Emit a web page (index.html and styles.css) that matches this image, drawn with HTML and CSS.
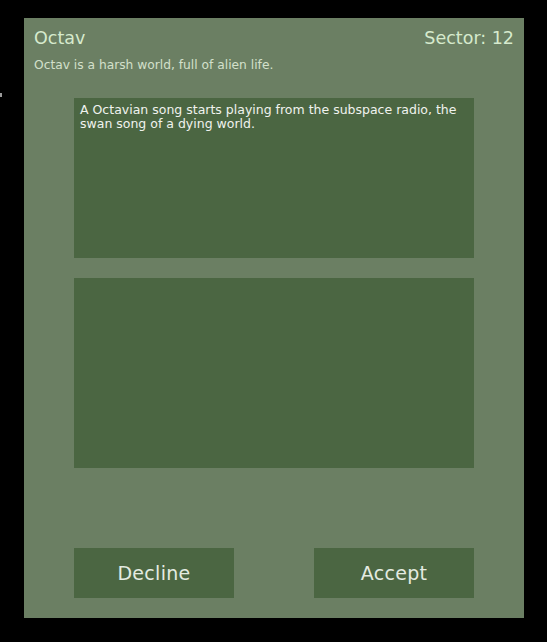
FILE: index.html
```html
<!DOCTYPE html>
<html>
<head>
<meta charset="utf-8">
<link rel="stylesheet" href="styles.css">
</head>
<body>
<span class="edge-mark"></span>
<div class="panel">
  <div class="header">
    <div class="title">Octav</div>
    <div class="sector">Sector: 12</div>
  </div>
  <div class="subtitle">Octav is a harsh world, full of alien life.</div>
  <div class="content">
    <div class="story">A Octavian song starts playing from the subspace radio, the swan song of a dying world.</div>
    <div class="options"></div>
    <div class="buttons">
      <button class="btn">Decline</button>
      <button class="btn">Accept</button>
    </div>
  </div>
</div>
</body>
</html>
```
FILE: styles.css
```css
html, body {
  margin: 0;
  padding: 0;
  background: #000;
  width: 547px;
  height: 642px;
  overflow: hidden;
  font-family: "DejaVu Sans", sans-serif;
}
body {
  position: relative;
  padding: 18px 0 0 24px;
  box-sizing: border-box;
}
.edge-mark {
  position: absolute;
  left: 0;
  top: 93px;
  width: 2px;
  height: 4px;
  background: #9a9a9a;
}
.panel {
  width: 500px;
  height: 600px;
  box-sizing: border-box;
  background: #6b7f63;
  padding: 10px 10px 20px;
  display: flex;
  flex-direction: column;
}
.header {
  display: flex;
  justify-content: space-between;
  align-items: baseline;
}
.title, .sector {
  font-size: 17.5px;
  line-height: 21px;
  color: #d6eacd;
}
.subtitle {
  margin-top: 9px;
  font-size: 12.25px;
  line-height: 14px;
  color: #d3e0cb;
}
.content {
  width: 400px;
  margin: 26px auto 0;
  display: flex;
  flex-direction: column;
  flex: 1;
}
.story {
  height: 160px;
  box-sizing: border-box;
  background: #4b6642;
  padding: 5px 6px;
  font-size: 12.5px;
  line-height: 14px;
  color: #f0f3ee;
}
.options {
  margin-top: 20px;
  height: 190px;
  background: #4b6642;
}
.buttons {
  margin-top: auto;
  display: flex;
  justify-content: space-between;
}
.btn {
  width: 160px;
  height: 50px;
  border: none;
  padding: 0;
  background: #4b6642;
  color: #e4ebe1;
  font-family: "DejaVu Sans", sans-serif;
  font-size: 19px;
  letter-spacing: 0.3px;
}
```
